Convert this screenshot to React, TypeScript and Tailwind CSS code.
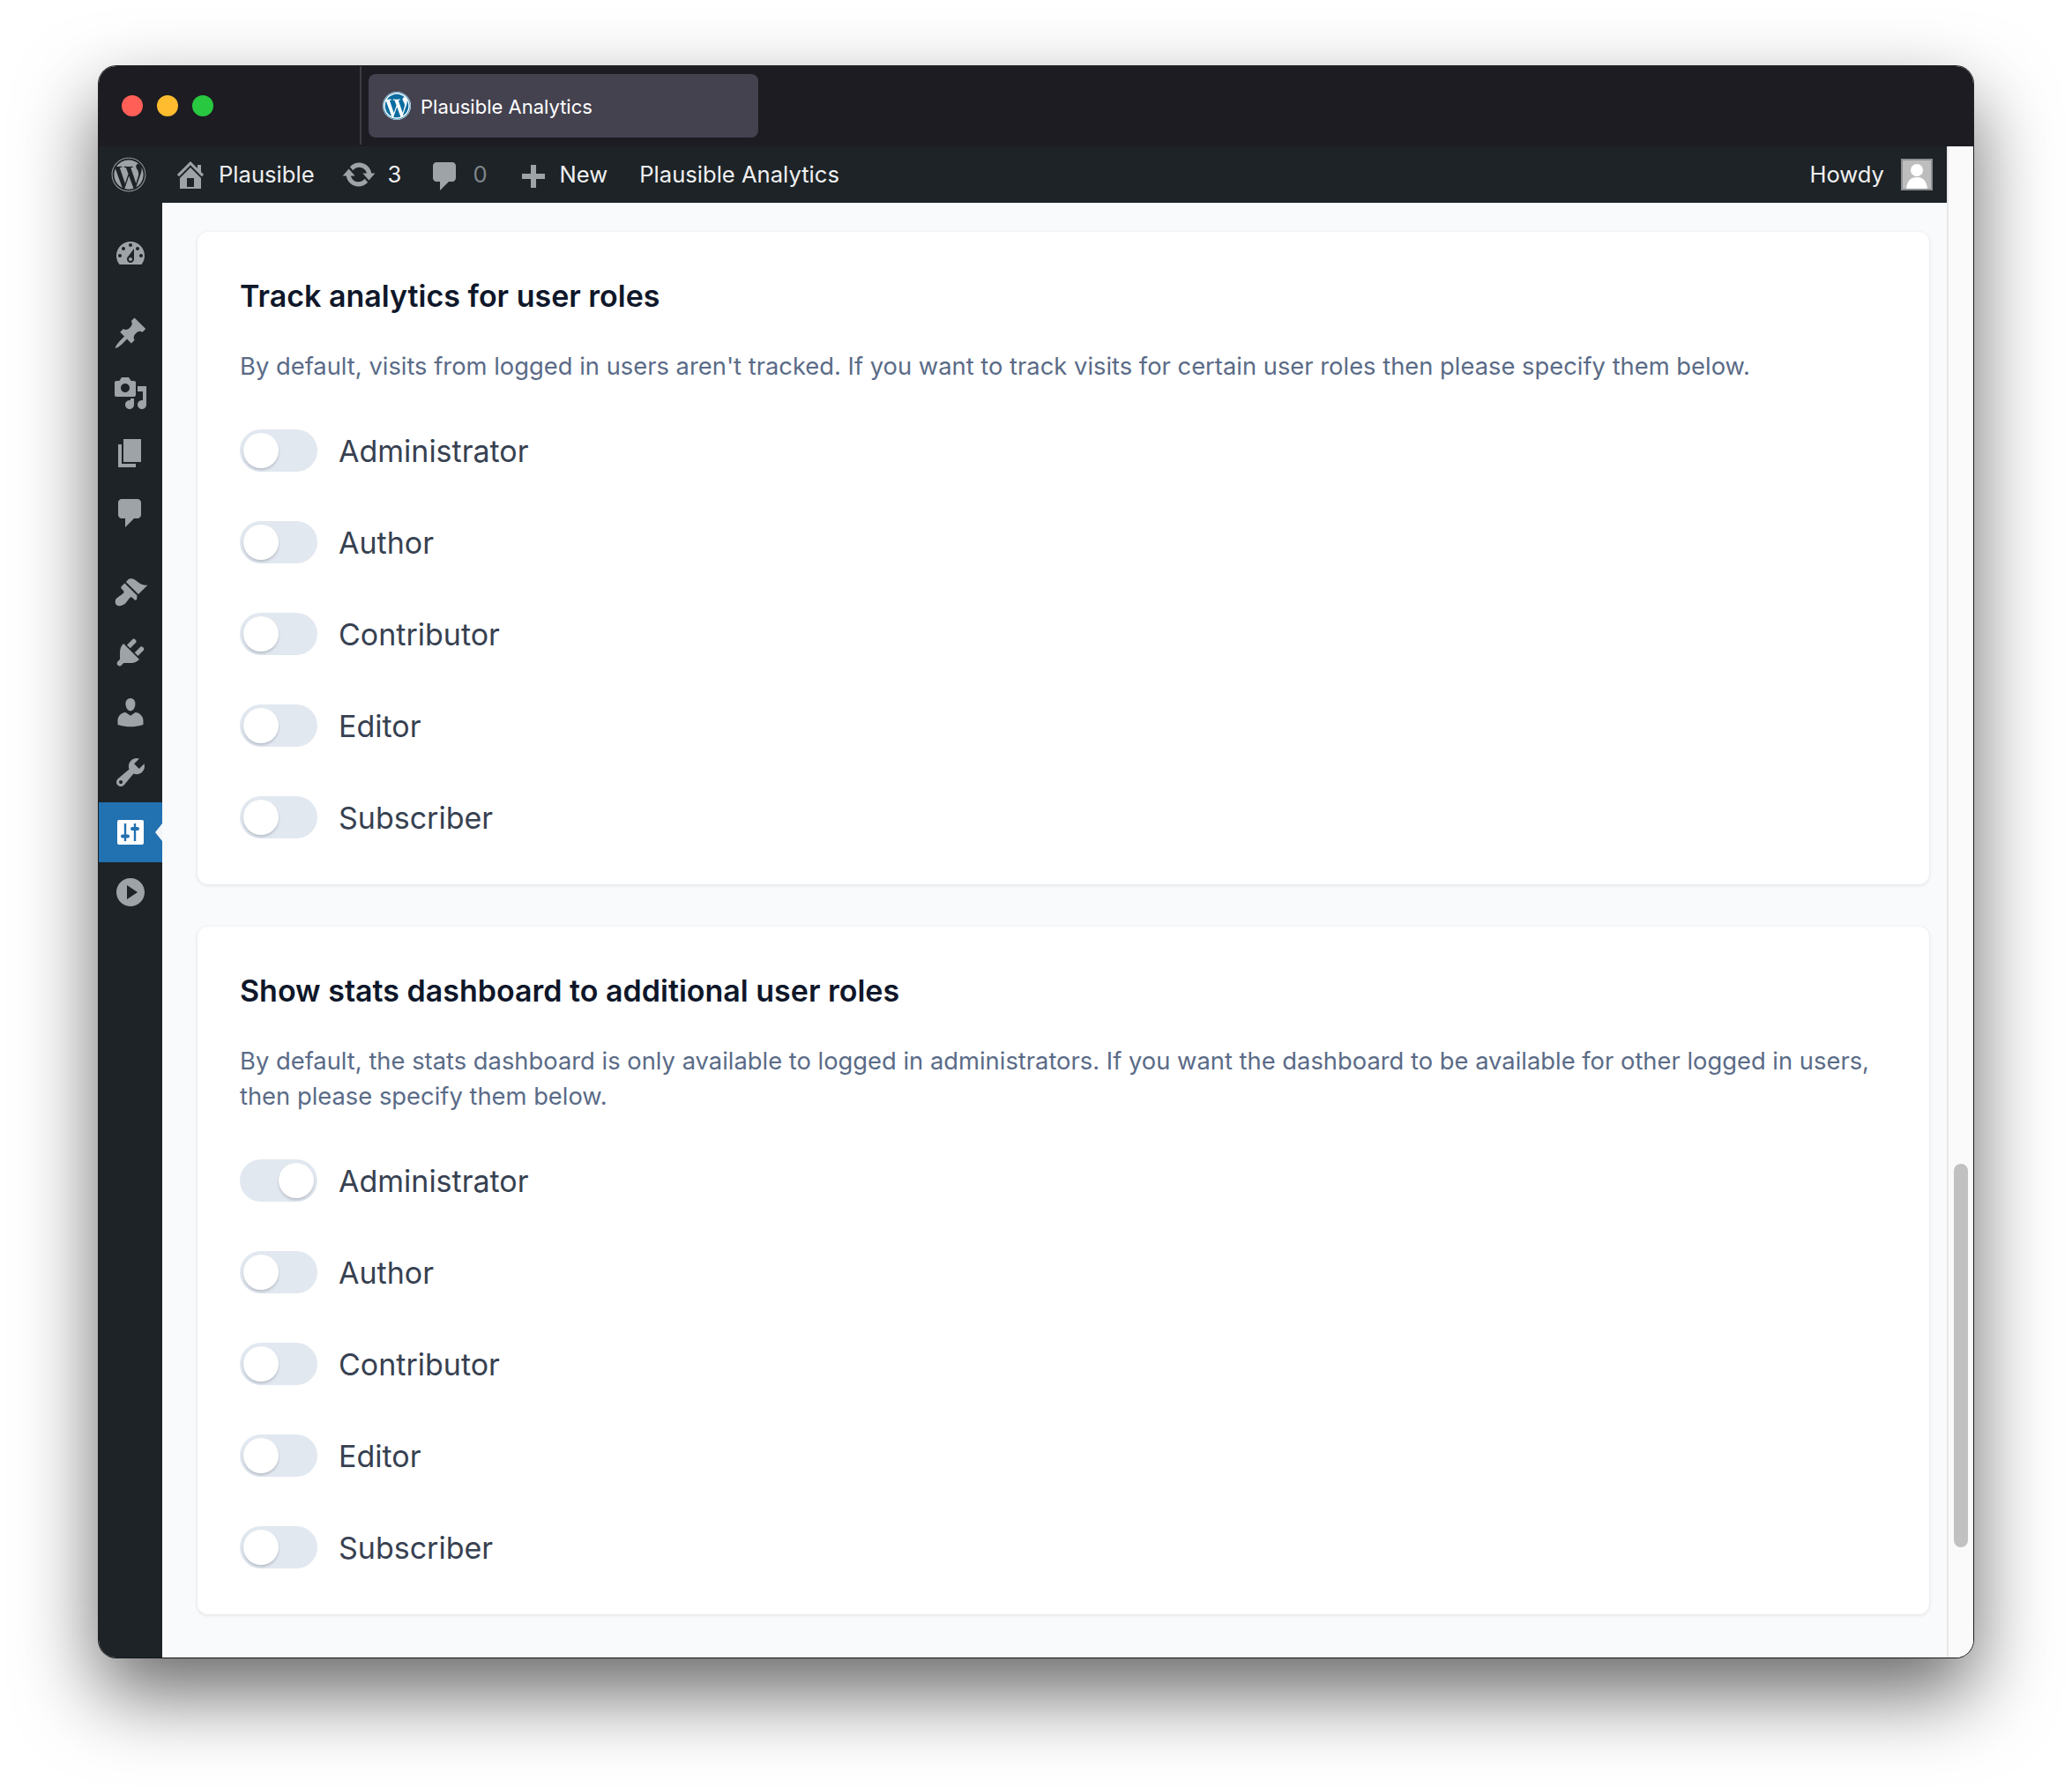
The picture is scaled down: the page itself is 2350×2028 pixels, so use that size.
import { FaWordpress } from 'react-icons/fa'

const ROLES = ['Administrator', 'Author', 'Contributor', 'Editor', 'Subscriber']

// Dashicons, 20x20 grid
const ICONS = {
  dashboard:
    'M3.76 16h12.48c1.1-1.37 1.76-3.11 1.76-5 0-4.42-3.58-8-8-8s-8 3.58-8 8c0 1.89.66 3.63 1.76 5zM10 4c.55 0 1 .45 1 1s-.45 1-1 1-1-.45-1-1 .45-1 1-1zM6 6c.55 0 1 .45 1 1s-.45 1-1 1-1-.45-1-1 .45-1 1-1zm8 0c.55 0 1 .45 1 1s-.45 1-1 1-1-.45-1-1 .45-1 1-1zm-5.37 5.55L12 7v6c0 1.1-.9 2-2 2s-2-.9-2-2c0-.57.24-1.08.63-1.45zM4 10c.55 0 1 .45 1 1s-.45 1-1 1-1-.45-1-1 .45-1 1-1zm12 0c.55 0 1 .45 1 1s-.45 1-1 1-1-.45-1-1 .45-1 1-1zm-5 3c0-.55-.45-1-1-1s-1 .45-1 1 .45 1 1 1 1-.45 1-1z',
  post: 'M10.44 3.02l1.82-1.82 6.36 6.35-1.83 1.82c-1.05-.68-2.48-.57-3.41.36l-.75.75c-.92.93-1.04 2.35-.35 3.41l-1.83 1.82-2.41-2.41-2.8 2.79c-.42.42-3.38 2.71-3.8 2.29s1.86-3.39 2.28-3.81l2.79-2.79L4.1 9.36l1.83-1.82c1.05.69 2.48.57 3.4-.36l.75-.75c.93-.92 1.05-2.35.36-3.41z',
  media:
    'M13 11V4c0-.55-.45-1-1-1h-1.67L9 1H5L3.67 3H2c-.55 0-1 .45-1 1v7c0 .55.45 1 1 1h10c.55 0 1-.45 1-1zM7 4.5c1.38 0 2.5 1.12 2.5 2.5S8.38 9.5 7 9.5 4.5 8.38 4.5 7 5.62 4.5 7 4.5zM14 6h5v10.5c0 1.38-1.12 2.5-2.5 2.5S14 17.88 14 16.5s1.12-2.5 2.5-2.5c.17 0 .34.02.5.05V9h-3V6zm-4 8.05V13h2v3.5c0 1.38-1.12 2.5-2.5 2.5S7 17.88 7 16.5 8.12 14 9.5 14c.17 0 .34.02.5.05z',
  page: 'M6 15V2h10v13H6zm-1 1h8v2H3V5h2v11z',
  comment: 'M5 2h9c1.1 0 2 .9 2 2v7c0 1.1-.9 2-2 2h-2l-5 5v-5H5c-1.1 0-2-.9-2-2V4c0-1.1.9-2 2-2z',
  brush:
    'M14.48 11.06L7.41 3.99l1.5-1.5c.5-.56 2.3-.47 3.51.32 1.21.8 1.43 1.28 2.91 2.1 1.18.64 2.45 1.26 4.45.85zm-.71.71L6.7 4.7 4.93 6.47c-.39.39-.39 1.02 0 1.41l1.06 1.06c.39.39.39 1.03 0 1.42-.6.6-1.43 1.11-2.21 1.69-.35.26-.7.53-1.01.84C1.43 13.23.78 15.78 2 17s3.77.57 5.12-.82c.31-.31.58-.66.84-1.01.58-.78 1.09-1.61 1.69-2.21.39-.39 1.03-.39 1.42 0l1.06 1.06c.39.39 1.02.39 1.41 0z',
  plugin:
    'M13.11 4.36L9.87 7.6 8 5.73l3.24-3.24c.35-.34 1.05-.2 1.56.32.52.51.66 1.21.31 1.55zm-8 1.77l.91-1.12 9.01 9.01-1.19.84c-.71.71-2.63 1.16-3.82 1.16H6.14L4.9 17.26c-.59.59-1.54.59-2.12 0-.59-.58-.59-1.53 0-2.12l1.24-1.24v-3.88c0-1.13.4-3.19 1.09-3.89zm7.26 3.97l3.24-3.24c.34-.35 1.04-.21 1.55.31.52.51.66 1.21.31 1.55l-3.24 3.25z',
  users:
    'M10 9.25c-2.27 0-2.73-3.44-2.73-3.44C7 4.02 7.82 2 9.97 2c2.16 0 2.98 2.02 2.71 3.81 0 0-.41 3.44-2.68 3.44zm0 2.57L12.72 10c2.39 0 4.52 2.33 4.52 4.53v2.49s-3.65 1.13-7.24 1.13c-3.65 0-7.24-1.13-7.24-1.13v-2.49c0-2.25 1.94-4.48 4.47-4.48z',
  tools:
    'M16.68 9.77c-1.34 1.34-3.3 1.67-4.95.99l-5.41 6.52c-.99.99-2.59.99-3.58 0s-.99-2.59 0-3.57l6.52-5.42c-.68-1.65-.35-3.61.99-4.95 1.28-1.28 3.12-1.62 4.72-1.06l-2.89 2.89 2.82 2.82 2.86-2.87c.53 1.58.18 3.39-1.08 4.65zM3.81 16.21c.4.39 1.04.39 1.43 0 .4-.4.4-1.04 0-1.43-.39-.4-1.03-.4-1.43 0-.39.39-.39 1.03 0 1.43z',
  play: 'M10 2c4.42 0 8 3.58 8 8s-3.58 8-8 8-8-3.58-8-8 3.58-8 8-8zM8 14l6-4-6-4v8z',
  update:
    'M10.2 3.28c3.53 0 6.43 2.61 6.92 6h2.08l-3.5 4-3.5-4h2.32c-.45-1.97-2.21-3.45-4.32-3.45-1.45 0-2.73.71-3.54 1.78L4.95 5.66C6.23 4.2 8.11 3.28 10.2 3.28zm-.4 13.44c-3.52 0-6.43-2.61-6.92-6H.8l3.5-4c1.17 1.33 2.33 2.67 3.5 4H5.48c.45 1.97 2.21 3.45 4.32 3.45 1.45 0 2.73-.71 3.54-1.78l1.71 1.95c-1.28 1.46-3.15 2.38-5.25 2.38z',
  home: 'M16 8.5l1.53 1.53-1.06 1.06L10 4.62l-6.47 6.47-1.06-1.06L10 2.5l4 4v-2h2v4zm-6-2.46l6 5.99V18H4v-5.97zM12 17v-5H8v5h4z',
  plus: 'M17 7v3h-5v5H9v-5H4V7h5V2h3v5h5z'
}

function Dashicon({ d, className }: { d: string; className?: string }): JSX.Element {
  return (
    <svg viewBox="0 0 20 20" className={className} fill="currentColor" fillRule="evenodd">
      <path d={d} />
    </svg>
  )
}

function MenuItem({ d, gap }: { d: string; gap?: boolean }): JSX.Element {
  return (
    <div className={`h-[68px] flex items-center justify-center text-[#9ea3a8] ${gap ? 'mt-[22px]' : ''}`}>
      <Dashicon d={d} className="w-10 h-10" />
    </div>
  )
}

function Toggle({ on }: { on?: boolean }): JSX.Element {
  return (
    <div
      className={`w-[88px] h-12 rounded-full bg-[#e2e8f0] p-1 flex shrink-0 ${on ? 'justify-end' : 'justify-start'}`}
    >
      <div className="w-10 h-10 rounded-full bg-white shadow-[0_2px_3px_rgba(15,23,42,0.2)]" />
    </div>
  )
}

function RoleCard({ title, children, active }: { title: string; children: React.ReactNode; active?: string }): JSX.Element {
  return (
    <section className="bg-white rounded-xl shadow-[0_1px_4px_rgba(15,23,42,0.12)] px-12 pt-12 pb-[52px]">
      <h2 className="text-[34px] leading-[50px] font-semibold text-[#0f172a]">{title}</h2>
      <p className="mt-[35px] text-[27.35px] leading-10 text-[#5a6b87]">{children}</p>
      <div className="mt-[51px] flex flex-col gap-14">
        {ROLES.map((role) => (
          <div key={role} className="h-12 flex items-center gap-6">
            <Toggle on={role === active} />
            <span className="text-[34px] text-[#374151]">{role}</span>
          </div>
        ))}
      </div>
    </section>
  )
}

export default function App(): JSX.Element {
  return (
    <div className="w-[2350px] h-[2028px] bg-white pt-[75px] pl-[112px] overflow-hidden font-['Inter',sans-serif]">
      <div className="w-[2126px] h-[1805px] rounded-[20px] overflow-hidden flex flex-col shadow-[0_40px_90px_rgba(0,0,0,0.6),0_0_0_1px_#2a2a2e]">
        {/* Title bar */}
        <div className="h-[91px] shrink-0 bg-[#1c1c22] flex items-start">
          <div className="w-[298px] h-[89px] border-r-2 border-[#3c3c42] flex items-center gap-4 pl-[26px] shrink-0">
            <div className="w-6 h-6 rounded-full bg-[#ff5f57]" />
            <div className="w-6 h-6 rounded-full bg-[#febc2e]" />
            <div className="w-6 h-6 rounded-full bg-[#28c840]" />
          </div>
          <div className="ml-[8px] mt-[9px] w-[442px] h-[72px] rounded-lg bg-[#44424f] flex items-center pl-4 gap-[11px]">
            <div className="w-8 h-8 rounded-full bg-white flex items-center justify-center shrink-0">
              <FaWordpress className="w-8 h-8 text-[#0a6c9f]" />
            </div>
            <span className="text-[22px] text-white pt-[3px]">Plausible Analytics</span>
          </div>
        </div>

        <div className="flex-1 flex min-h-0">
          <div className="flex-1 flex flex-col min-w-0">
            {/* Admin bar */}
            <div className="h-16 shrink-0 bg-[#1d2327] flex items-center text-[25.6px] text-[#f0f0f1] pl-[14px] pr-[16px]">
              <FaWordpress className="w-10 h-10 text-[#9ea3a8]" />
              <Dashicon d={ICONS.home} className="w-10 h-10 ml-[30px] text-[#9ea3a8]" />
              <span className="ml-[12px] pt-[1px]">Plausible</span>
              <Dashicon d={ICONS.update} className="w-10 h-10 ml-[30px] text-[#9ea3a8]" />
              <span className="ml-[13px] pt-[1px]">3</span>
              <Dashicon d={ICONS.comment} className="w-10 h-10 ml-[30px] mt-[4px] text-[#9ea3a8]" />
              <span className="ml-[11px] pt-[1px] text-[#80858a]">0</span>
              <Dashicon d={ICONS.plus} className="w-10 h-10 ml-[31px] mt-[10px] text-[#9ea3a8]" />
              <span className="ml-[11px] pt-[1px]">New</span>
              <span className="ml-[36px] pt-[1px]">Plausible Analytics</span>
              <span className="ml-auto pt-[1px]">Howdy</span>
              <div className="ml-[19px] w-9 h-9 bg-[#bdbdbd] border-2 border-[#8c8f94] flex items-end justify-center overflow-hidden">
                <svg viewBox="0 0 32 32" className="w-8 h-8" fill="#fff">
                  <circle cx="16" cy="11" r="7" />
                  <path d="M4 32c1-9 5-13 12-13s11 4 12 13z" />
                </svg>
              </div>
            </div>

            <div className="flex-1 flex min-h-0">
              {/* Sidebar */}
              <nav className="w-[72px] shrink-0 bg-[#1d2327] pt-6">
                <MenuItem d={ICONS.dashboard} />
                <MenuItem d={ICONS.post} gap />
                <MenuItem d={ICONS.media} />
                <MenuItem d={ICONS.page} />
                <MenuItem d={ICONS.comment} />
                <MenuItem d={ICONS.brush} gap />
                <MenuItem d={ICONS.plugin} />
                <MenuItem d={ICONS.users} />
                <MenuItem d={ICONS.tools} />
                <div className="h-[68px] bg-[#2271b1] flex items-center justify-center relative">
                  <svg viewBox="0 0 30 28" className="w-[30px] h-7">
                    <rect width="30" height="28" rx="2" fill="#fff" />
                    <path d="M9 4v20M20 4v20" stroke="#2271b1" strokeWidth="2.4" />
                    <path d="M6 18.5h6M17 10h6" stroke="#2271b1" strokeWidth="4" strokeLinecap="round" />
                  </svg>
                  <div className="absolute right-0 top-1/2 -translate-y-1/2 border-y-[10px] border-y-transparent border-r-[8px] border-r-[#f1f5f9]" />
                </div>
                <MenuItem d={ICONS.play} />
              </nav>

              {/* Content */}
              <main className="flex-1 min-w-0 bg-[#f9fafb] pt-[33px] pl-10 pr-5 flex flex-col gap-12 overflow-hidden">
                <RoleCard title="Track analytics for user roles">
                  By default, visits from logged in users aren't tracked. If you want to track visits for certain user
                  roles then please specify them below.
                </RoleCard>
                <RoleCard title="Show stats dashboard to additional user roles" active="Administrator">
                  By default, the stats dashboard is only available to logged in administrators. If you want the
                  dashboard to be available for other logged in users, then please specify them below.
                </RoleCard>
              </main>
            </div>
          </div>

          {/* Scrollbar gutter */}
          <div className="w-[30px] shrink-0 bg-[#fafafa] border-l-2 border-[#e8e8e8] pl-[6px] pt-[1154px]">
            <div className="w-4 h-[435px] rounded-full bg-[#c1c1c1]" />
          </div>
        </div>
      </div>
    </div>
  )
}
